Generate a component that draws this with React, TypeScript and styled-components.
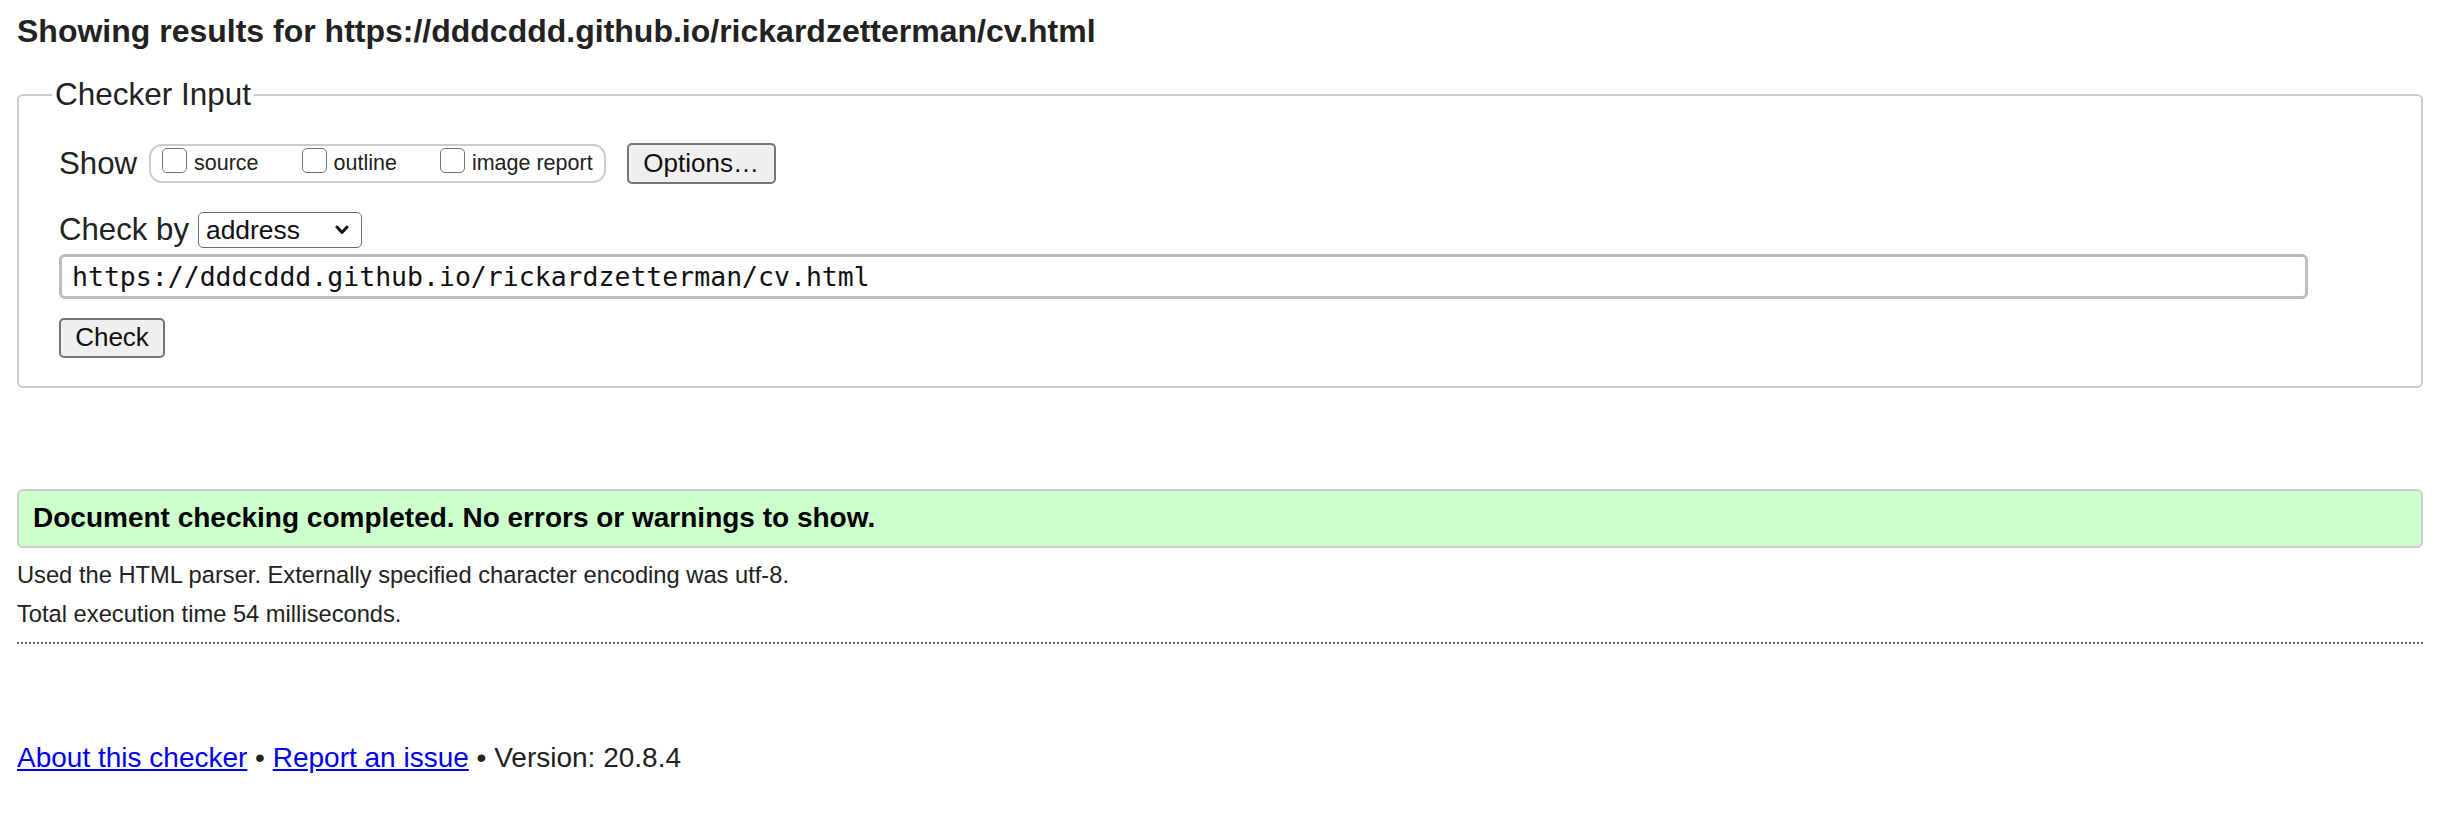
import React from "react";
import styled, { createGlobalStyle } from "styled-components";

const GlobalStyle = createGlobalStyle`
  html, body {
    margin: 0;
    padding: 0;
    background: #ffffff;
  }
  body {
    font-family: "Liberation Sans", Arial, Helvetica, sans-serif;
    color: #222222;
  }
`;

const Page = styled.div`
  padding: 12px 29px 40px 17px;
`;

const Title = styled.h2`
  margin: 0;
  font-size: 32px;
  line-height: 38px;
  font-weight: bold;
  color: #222222;
`;

const Fieldset = styled.fieldset`
  margin: 27px 0 0 0;
  padding: 31px 0 28px 40px;
  border: 2px solid #cccccc;
  border-radius: 6px;
  min-inline-size: 0;
`;

const Legend = styled.legend`
  font-size: 31.5px;
  line-height: 35px;
  padding: 0 3px;
  margin-left: -7px;
  color: #222222;
`;

const FieldBody = styled.div`
  display: flex;
  flex-direction: column;
  align-items: flex-start;
`;

const Row = styled.div<{ $height: number; $gapAfter: number }>`
  display: flex;
  align-items: center;
  height: ${(p) => p.$height}px;
  margin-bottom: ${(p) => p.$gapAfter}px;
`;

const RowLabel = styled.span<{ $gap: number }>`
  font-size: 31.2px;
  line-height: 36px;
  margin-right: ${(p) => p.$gap}px;
  color: #222222;
`;

const Pill = styled.div`
  display: flex;
  align-items: center;
  gap: 43px;
  height: 39px;
  box-sizing: border-box;
  padding: 0 11px;
  border: 2px solid #cccccc;
  border-radius: 13px;
  margin-right: 21px;
`;

const CheckLabel = styled.label`
  display: flex;
  align-items: center;
  gap: 7px;
  font-size: 21.5px;
  line-height: 25px;
  color: #222222;
`;

const CheckBox = styled.input`
  appearance: none;
  -webkit-appearance: none;
  width: 25px;
  height: 25px;
  box-sizing: border-box;
  margin: 0 0 7px 0;
  border: 1.5px solid #727272;
  border-radius: 5px;
  background: #ffffff;
`;

const Button = styled.button<{ $w: number; $h: number }>`
  width: ${(p) => p.$w}px;
  height: ${(p) => p.$h}px;
  box-sizing: border-box;
  padding: 0;
  font-family: "Liberation Sans", Arial, Helvetica, sans-serif;
  font-size: 26px;
  color: #111111;
  background: #efefef;
  border: 2px solid #767676;
  border-radius: 5px;
`;

const SelectWrap = styled.div`
  position: relative;
  width: 164px;
  height: 36px;
`;

const Select = styled.select`
  appearance: none;
  -webkit-appearance: none;
  width: 100%;
  height: 100%;
  box-sizing: border-box;
  padding: 0 0 0 7px;
  font-family: "Liberation Sans", Arial, Helvetica, sans-serif;
  font-size: 26.4px;
  color: #111111;
  background: #ffffff;
  border: 1.5px solid #6d6d6d;
  border-radius: 5px;
`;

const Chevron = styled.svg`
  position: absolute;
  right: 13px;
  top: 13px;
  pointer-events: none;
`;

const UrlInput = styled.input`
  width: 2249px;
  height: 45px;
  box-sizing: border-box;
  padding: 0 10px;
  margin: 0 0 19px 0;
  font-family: "DejaVu Sans Mono", "Liberation Mono", monospace;
  font-size: 26.5px;
  color: #111111;
  background: #ffffff;
  border: 3px solid #bdbdbd;
  border-radius: 6px;
  outline: none;
`;

const Success = styled.div`
  margin-top: 101px;
  height: 59px;
  box-sizing: border-box;
  display: flex;
  align-items: center;
  padding: 0 14px;
  background: #ccffcc;
  border: 2px solid #cccccc;
  border-radius: 6px;
  font-size: 28px;
  font-weight: bold;
  color: #000000;
`;

const Note = styled.p<{ $top: number }>`
  margin: ${(p) => p.$top}px 0 0 0;
  font-size: 23.7px;
  line-height: 28px;
  color: #222222;
`;

const Rule = styled.hr`
  margin: 14px 0 0 0;
  height: 0;
  border: none;
  border-top: 2px dotted #6a6a6a;
`;

const Footer = styled.p`
  margin: 98px 0 0 0;
  font-size: 28px;
  line-height: 32px;
  color: #222222;
`;

const Link = styled.a`
  color: #0000ee;
  text-decoration: underline;
`;

export default function App() {
  return (
    <>
      <GlobalStyle />
      <Page>
        <Title>Showing results for https://dddcddd.github.io/rickardzetterman/cv.html</Title>
        <Fieldset>
          <Legend>Checker Input</Legend>
          <FieldBody>
            <Row $height={41} $gapAfter={27.5}>
              <RowLabel $gap={12}>Show</RowLabel>
              <Pill>
                <CheckLabel>
                  <CheckBox type="checkbox" />
                  source
                </CheckLabel>
                <CheckLabel>
                  <CheckBox type="checkbox" />
                  outline
                </CheckLabel>
                <CheckLabel>
                  <CheckBox type="checkbox" />
                  image report
                </CheckLabel>
              </Pill>
              <Button type="button" $w={149} $h={41}>Options…</Button>
            </Row>
            <Row $height={36} $gapAfter={6}>
              <RowLabel $gap={9}>Check by</RowLabel>
              <SelectWrap>
                <Select defaultValue="address">
                  <option value="address">address</option>
                  <option value="file">file upload</option>
                  <option value="text">text input</option>
                </Select>
                <Chevron width="14" height="10" viewBox="0 0 14 10">
                  <polyline points="2,2 7,7.5 12,2" fill="none" stroke="#111" strokeWidth="3" strokeLinecap="round" strokeLinejoin="round" />
                </Chevron>
              </SelectWrap>
            </Row>
            <UrlInput type="url" defaultValue="https://dddcddd.github.io/rickardzetterman/cv.html" />
            <Button type="submit" $w={106} $h={40}>Check</Button>
          </FieldBody>
        </Fieldset>
        <Success>Document checking completed. No errors or warnings to show.</Success>
        <Note $top={13}>Used the HTML parser. Externally specified character encoding was utf-8.</Note>
        <Note $top={11}>Total execution time 54 milliseconds.</Note>
        <Rule />
        <Footer>
          <Link href="#about">About this checker</Link> • <Link href="#issue">Report an issue</Link> • Version: 20.8.4
        </Footer>
      </Page>
    </>
  );
}
